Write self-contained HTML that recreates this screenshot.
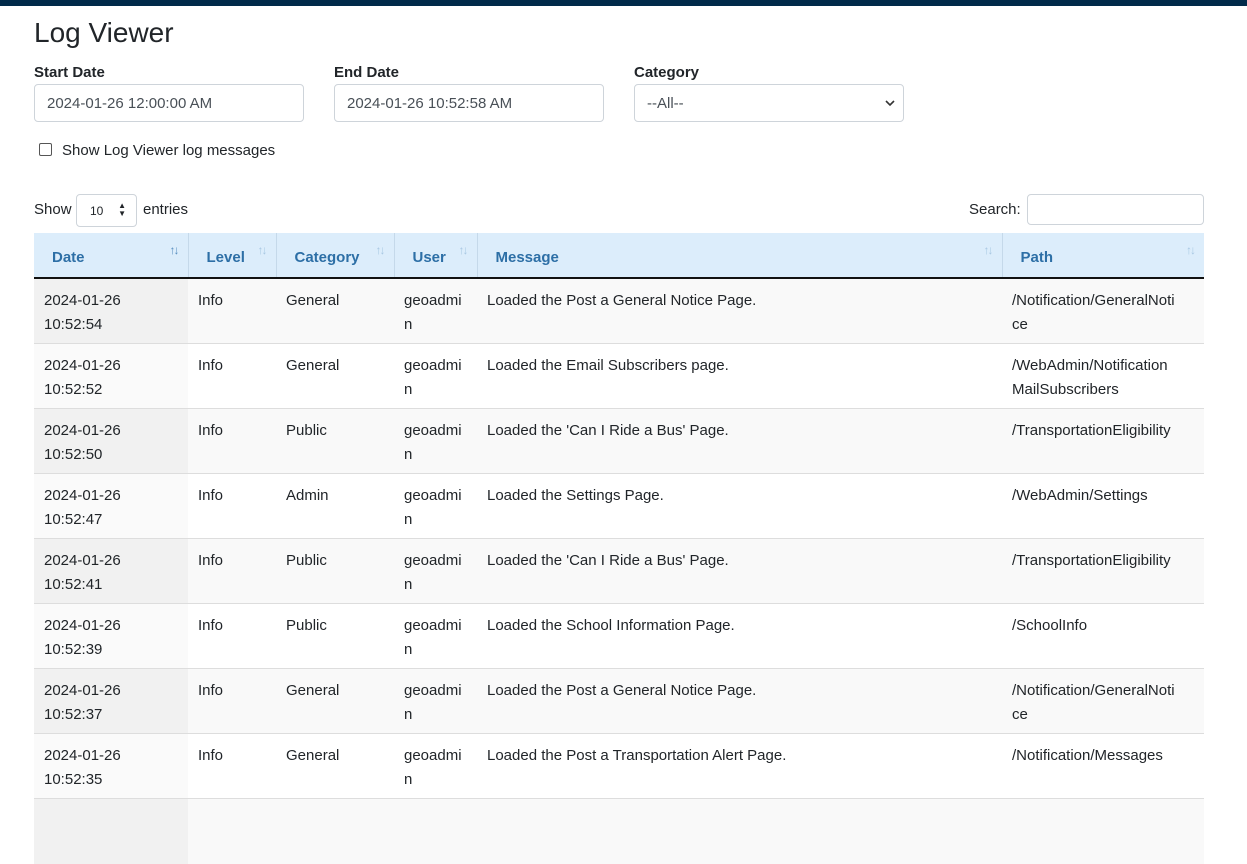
<!DOCTYPE html>
<html><head><style>
body{margin:0;font-family:"Liberation Sans",sans-serif;color:#212529;background:#fff;width:1247px;height:812px;overflow:hidden;position:relative;font-size:15px}
.bar{position:absolute;left:0;top:0;width:1247px;height:6px;background:#012a4a}
h1{position:absolute;left:34px;top:17px;margin:0;font-size:28px;font-weight:500}
.lbl{position:absolute;top:64px;font-weight:bold;font-size:15px}
.inp{position:absolute;top:84px;width:270px;height:38px;border:1px solid #ced4da;border-radius:4px;box-sizing:border-box;padding:10px 12px;color:#495057;font-size:15px}
.chk{position:absolute;left:39px;top:143px;width:11px;height:11px;border:1px solid #555;border-radius:2px}
.chkl{position:absolute;left:62px;top:142px}
table{position:absolute;left:34px;top:233px;width:1170px;border-collapse:collapse;table-layout:fixed}
th{background:#dcedfb;color:#2d6fa6;text-align:left;height:45px;padding:4px 18px 0;border-left:1px solid #c5d9ea;border-bottom:2px solid #111;font-size:15px;position:relative;box-sizing:border-box}
th:first-child{border-left:none}
th span{position:absolute;right:10px;top:10px;color:#a9c8e3;font-size:12px;font-weight:normal;letter-spacing:-2px}
td{vertical-align:top;padding:10px 10px 6px;height:65px;box-sizing:border-box;line-height:24px;border-top:1px solid #ddd;white-space:nowrap;overflow:hidden}
tbody tr:first-child td{border-top:none;padding-top:10px}
tr:nth-child(odd) td{background:#f9f9f9}
tr:nth-child(odd) td:first-child{background:#f1f1f1}
tr:nth-child(even) td:first-child{background:#fafafa}
</style></head><body>
<div class="bar"></div>
<h1>Log Viewer</h1>
<div class="lbl" style="left:34px">Start Date</div>
<div class="lbl" style="left:334px">End Date</div>
<div class="lbl" style="left:634px">Category</div>
<div class="inp" style="left:34px">2024-01-26 12:00:00 AM</div>
<div class="inp" style="left:334px">2024-01-26 10:52:58 AM</div>
<div class="inp" style="left:634px">--All--<svg style="position:absolute;right:8px;top:14px" width="10" height="8" viewBox="0 0 10 8"><path d="M1 2l4 4 4-4" stroke="#333" stroke-width="1.6" fill="none"/></svg></div>
<div class="chk"></div><div class="chkl">Show Log Viewer log messages</div>
<div style="position:absolute;left:34px;top:201px">Show</div>
<div style="position:absolute;left:76px;top:194px;width:61px;height:33px;border:1px solid #ced4da;border-radius:4px;box-sizing:border-box;font-size:12px;padding:9px 13px">10<span style="position:absolute;right:10px;top:7px;font-size:8px;line-height:8px">▲<br>▼</span></div>
<div style="position:absolute;left:143px;top:201px">entries</div>
<div style="position:absolute;left:969px;top:201px">Search:</div>
<div style="position:absolute;left:1027px;top:194px;width:177px;height:31px;border:1px solid #ced4da;border-radius:4px;box-sizing:border-box"></div>
<table>
<colgroup><col style="width:154px"><col style="width:88px"><col style="width:118px"><col style="width:83px"><col style="width:525px"><col style="width:202px"></colgroup>
<thead><tr><th>Date<span style="color:#5a90c0">↑↓</span></th><th>Level<span>↑↓</span></th><th>Category<span>↑↓</span></th><th>User<span>↑↓</span></th><th>Message<span>↑↓</span></th><th>Path<span>↑↓</span></th></tr></thead>
<tbody>
<tr><td>2024-01-26<br>10:52:54</td><td>Info</td><td>General</td><td>geoadmi<br>n</td><td>Loaded the Post a General Notice Page.</td><td>/Notification/GeneralNoti<br>ce</td></tr>
<tr><td>2024-01-26<br>10:52:52</td><td>Info</td><td>General</td><td>geoadmi<br>n</td><td>Loaded the Email Subscribers page.</td><td>/WebAdmin/Notification<br>MailSubscribers</td></tr>
<tr><td>2024-01-26<br>10:52:50</td><td>Info</td><td>Public</td><td>geoadmi<br>n</td><td>Loaded the 'Can I Ride a Bus' Page.</td><td>/TransportationEligibility</td></tr>
<tr><td>2024-01-26<br>10:52:47</td><td>Info</td><td>Admin</td><td>geoadmi<br>n</td><td>Loaded the Settings Page.</td><td>/WebAdmin/Settings</td></tr>
<tr><td>2024-01-26<br>10:52:41</td><td>Info</td><td>Public</td><td>geoadmi<br>n</td><td>Loaded the 'Can I Ride a Bus' Page.</td><td>/TransportationEligibility</td></tr>
<tr><td>2024-01-26<br>10:52:39</td><td>Info</td><td>Public</td><td>geoadmi<br>n</td><td>Loaded the School Information Page.</td><td>/SchoolInfo</td></tr>
<tr><td>2024-01-26<br>10:52:37</td><td>Info</td><td>General</td><td>geoadmi<br>n</td><td>Loaded the Post a General Notice Page.</td><td>/Notification/GeneralNoti<br>ce</td></tr>
<tr><td>2024-01-26<br>10:52:35</td><td>Info</td><td>General</td><td>geoadmi<br>n</td><td>Loaded the Post a Transportation Alert Page.</td><td>/Notification/Messages</td></tr>
<tr><td>&nbsp;</td><td></td><td></td><td></td><td></td><td></td></tr>
</tbody></table>
</body></html>
